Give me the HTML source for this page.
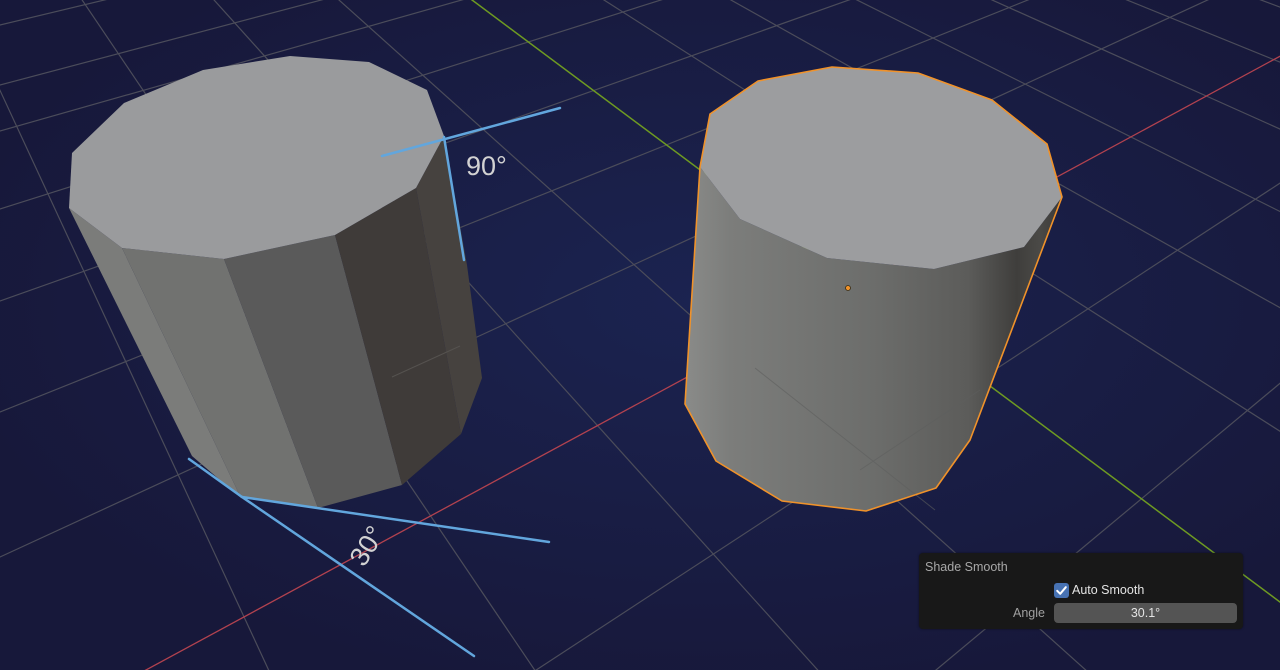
<!DOCTYPE html>
<html><head><meta charset="utf-8"><style>
html,body{margin:0;padding:0;width:1280px;height:670px;overflow:hidden;background:#181a3b;font-family:"Liberation Sans","DejaVu Sans",sans-serif}
svg{position:absolute;left:0;top:0}
.panel{position:absolute;left:919px;top:553px;width:324px;height:76px;background:#181818;border-radius:4px;box-shadow:0 0 2px rgba(0,0,0,.5)}
.t{position:absolute;font-size:12.5px;white-space:nowrap}
</style></head><body>
<svg width="1280" height="670" viewBox="0 0 1280 670">
<defs>
<radialGradient id="bg" cx="0.55" cy="0.45" r="0.6">
<stop offset="0" stop-color="#1b2350"/><stop offset="1" stop-color="#17183a"/>
</radialGradient>
<linearGradient id="side" x1="685" y1="0" x2="1062" y2="0" gradientUnits="userSpaceOnUse">
<stop offset="0" stop-color="#8a8b89"/><stop offset="0.12" stop-color="#7c7d7b"/><stop offset="0.5" stop-color="#6c6d6b"/><stop offset="0.75" stop-color="#5c5c5a"/><stop offset="0.88" stop-color="#3f3e3c"/><stop offset="0.94" stop-color="#4a4946"/><stop offset="1" stop-color="#3a3936"/>
</linearGradient>
</defs>
<rect width="1280" height="670" fill="url(#bg)"/>
<g stroke="#4b4c5a" stroke-width="1.2" fill="none">
<line x1="2400" y1="-550" x2="-2400" y2="600"/>
<line x1="2400" y1="-550" x2="-2400" y2="720"/>
<line x1="2400" y1="-550" x2="-2400" y2="812"/>
<line x1="2400" y1="-550" x2="-2400" y2="968"/>
<line x1="2400" y1="-550" x2="-2400" y2="1152"/>
<line x1="2400" y1="-550" x2="-2400" y2="1374"/>
<line x1="2400" y1="-550" x2="-2400" y2="1664"/>
<line x1="2400" y1="-550" x2="-2400" y2="2592"/>
<line x1="2400" y1="-550" x2="-2400" y2="3450"/>
<line x1="2400" y1="-550" x2="-2400" y2="4850"/>
<line x1="-313" y1="-585" x2="-256" y2="2000"/>
<line x1="-313" y1="-585" x2="319" y2="2000"/>
<line x1="-313" y1="-585" x2="885" y2="2000"/>
<line x1="-313" y1="-585" x2="1433" y2="2000"/>
<line x1="-313" y1="-585" x2="2016" y2="2000"/>
<line x1="-313" y1="-585" x2="2568" y2="2000"/>
<line x1="-313" y1="-585" x2="3739" y2="2000"/>
<line x1="-313" y1="-585" x2="4300" y2="2000"/>
<line x1="-313" y1="-585" x2="4857" y2="2000"/>
<line x1="-313" y1="-585" x2="5454" y2="2000"/>
<line x1="-313" y1="-585" x2="6050" y2="2000"/>
<line x1="-313" y1="-585" x2="6642" y2="2000"/>
<line x1="-313" y1="-585" x2="7257" y2="2000"/>
</g>
<line x1="2400" y1="-550" x2="-2400" y2="2048" stroke="#b2424f" stroke-width="1.3"/>
<line x1="-313" y1="-585" x2="3156" y2="2000" stroke="#6e9a22" stroke-width="1.5"/>

<!-- left cylinder -->
<polygon points="69,208 122,248 241,498 192,456" fill="#7b7c7a"/>
<polygon points="122,248 224,259 318,508 241,498" fill="#717270"/>
<polygon points="224,259 335,235 402,485 318,508" fill="#5a5a5a"/>
<polygon points="335,235 416,188 461,434 402,485" fill="#3f3b39"/>
<polygon points="416,188 444,136 467,265 482,378 461,434" fill="#46423f"/>
<polygon points="69,208 72,153 124,103 203,70 290,56 369,62 427,90 444,136 416,188 335,235 224,259 122,248" fill="#9a9b9d"/>
<line x1="392" y1="377" x2="460" y2="346" stroke="#55524f" stroke-width="1"/>

<!-- right cylinder -->
<polygon points="700,167 740,219 827,258 934,269 1024,247 1062,197 970,440 936,488 866,511 782,501 716,461 685,404" fill="url(#side)"/>
<polygon points="700,167 710,114 758,81 832,67 918,73 992,100 1047,144 1062,197 1024,247 934,269 827,258 740,219" fill="#9c9d9f"/>
<g stroke="#5e5f5e" stroke-width="1" opacity="0.6">
<line x1="755" y1="368" x2="935" y2="510"/>
<line x1="860" y1="470" x2="980" y2="390"/>
</g>
<polygon points="700,167 710,114 758,81 832,67 918,73 992,100 1047,144 1062,197 970,440 936,488 866,511 782,501 716,461 685,404" fill="none" stroke="#f0922a" stroke-width="1.6" stroke-linejoin="round"/>
<circle cx="848" cy="288" r="2.5" fill="#f0922a" stroke="#3a2a10" stroke-width="0.8"/>

<!-- blue measurement lines -->
<g stroke="#62a6dd" stroke-width="2.5" fill="none" stroke-linecap="round">
<line x1="382" y1="156" x2="560" y2="108"/>
<line x1="444" y1="137" x2="464" y2="260"/>
<polyline points="189,459 242,497 474,656"/>
<line x1="242" y1="497" x2="549" y2="542"/>
</g>
<text x="466" y="175" font-size="27" fill="#d2d2d2" font-family="Liberation Sans, sans-serif">90°</text>
<text x="0" y="0" font-size="27" fill="#d2d2d2" font-family="Liberation Sans, sans-serif" transform="translate(364,568) rotate(-58)">30°</text>
</svg>
<div class="panel"></div>
<div class="t" style="left:925px;top:560px;color:#a8a8a8">Shade Smooth</div>
<div style="position:absolute;left:1054px;top:583px;width:15px;height:15px;background:#4772b3;border-radius:3px"></div>
<svg width="15" height="15" style="left:1054px;top:583px" viewBox="0 0 15 15"><path d="M3.2 7.8 L6.2 10.8 L11.8 4.2" stroke="#fff" stroke-width="2" fill="none" stroke-linecap="round" stroke-linejoin="round"/></svg>
<div class="t" style="left:1072px;top:583px;color:#e4e4e4">Auto Smooth</div>
<div class="t" style="left:1000px;top:606px;width:45px;text-align:right;color:#a0a0a0">Angle</div>
<div style="position:absolute;left:1054px;top:603px;width:183px;height:20px;background:#545454;border-radius:4px"></div>
<div class="t" style="left:1054px;top:606px;width:183px;text-align:center;color:#e4e4e4">30.1°</div>
</body></html>
